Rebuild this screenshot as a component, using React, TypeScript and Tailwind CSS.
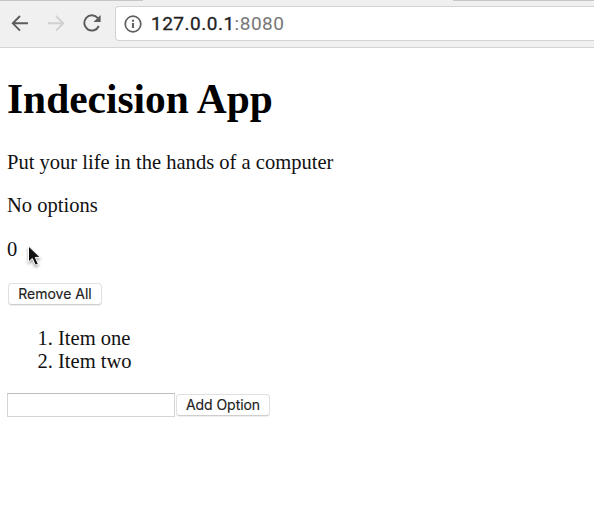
import React from "react";

function Toolbar() {
  return (
    <header className="relative h-12 border-b border-[#d4d4d4] bg-[#f0f0f0]">
      <div className="flex h-px justify-between">
        <div className="w-[143px] bg-[#c6c6c6]" />
        <div className="w-[141px] bg-[#c6c6c6]" />
      </div>
      <div className="flex pt-[5px]">
        <svg className="h-[35px] w-[115px] shrink-0" viewBox="0 0 115 35" fill="none" strokeWidth="1.9">
          <path d="M28 17.3H13M20 10l-7.2 7.3L20 24.6" stroke="#5c5c5c" />
          <path d="M48 17.3h15M56 10l7.2 7.3L56 24.6" stroke="#d0d0d0" />
          <path d="M97.8 12.2A7.6 7.6 0 1 0 98.8 20" stroke="#5c5c5c" strokeWidth="2" />
          <path d="M100.6 9v7.1h-7.1z" fill="#5c5c5c" />
        </svg>
        <div className="flex h-[35px] flex-1 items-center rounded-l-[4px] border border-r-0 border-[#d3d3d3] bg-white pl-2">
          <svg className="h-[18px] w-[18px]" viewBox="0 0 18 18" fill="none">
            <circle cx="9" cy="9" r="7.8" stroke="#606060" strokeWidth="1.7" />
            <path d="M9 8v5M9 4.8v2" stroke="#606060" strokeWidth="2.1" />
          </svg>
          <div className="ml-[9px] mt-px whitespace-nowrap font-[Roboto,sans-serif] text-[19px] leading-6 tracking-[0.5px] text-[#777]">
            <span className="text-[#222] [-webkit-text-stroke:0.3px]">127.0.0.1</span>:8080
          </div>
        </div>
      </div>
    </header>
  );
}

function Button({ children, className }: { children: React.ReactNode; className: string }) {
  return (
    <button
      className={`h-[22px] shrink-0 whitespace-nowrap rounded-[4px] border border-[#e0e0e0] border-b-[#cecece] bg-white text-center font-[Inter,sans-serif] text-[14px] leading-[20px] text-[#222] shadow-[0_1px_1px_#eeeeee] [-webkit-text-stroke:0.15px] ${className}`}
    >
      {children}
    </button>
  );
}

export default function App() {
  return (
    <div className="relative h-[506px] w-[594px] overflow-hidden bg-white">
      <Toolbar />
      <main className="pl-[7px] pt-[27px] font-['Liberation_Serif',serif] text-[20.55px] leading-[23px] text-[#111]">
        <h1 className="text-[41.4px] font-bold leading-[48px] text-black">Indecision App</h1>
        <p className="mt-[28px]">Put your life in the hands of a computer</p>
        <p className="mt-[20px]">No options</p>
        <p className="mt-[21px]">0</p>
        <Button className="ml-px mt-[22px] block w-[94px]">Remove All</Button>
        <ol className="mt-[22px] list-decimal pl-[51px]">
          <li>Item one</li>
          <li>Item two</li>
        </ol>
        <form className="mt-[20px] flex items-center" onSubmit={(e) => e.preventDefault()}>
          <input className="h-6 w-[168px] border border-[#d4d4d4] border-t-[#bebebe] bg-white px-1 text-sm outline-none" />
          <Button className="ml-px w-[94px] tracking-[-0.05px]">Add Option</Button>
        </form>
      </main>
      <svg className="absolute left-[24px] top-[243px] h-[28px] w-[20px] drop-shadow-[0_2px_1.5px_rgba(0,0,0,0.35)]" viewBox="0 0 20 28">
        <path d="M4.5 3v16l3.8-3.5 3 6.7 3-1.3-3-6.5h5z" fill="#111" stroke="#fff" strokeWidth="1" />
      </svg>
    </div>
  );
}
